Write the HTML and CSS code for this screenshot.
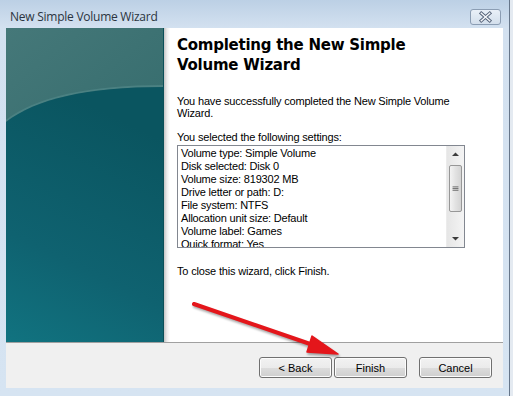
FILE: index.html
```html
<!DOCTYPE html>
<html lang="en">
<head>
    <meta charset="UTF-8">
    <title>New Simple Volume Wizard</title>
    <link rel="stylesheet" href="styles.css">
</head>
<body>
    <div class="window">
        <div class="titlebar">
            <span class="title">New Simple Volume Wizard</span>
            <button class="close" type="button" aria-label="Close">
                <svg width="31" height="16" viewBox="0 0 31 16">
                    <path d="M11 4 L20 12 M20 4 L11 12" stroke="#56647a" stroke-width="3.6" stroke-linecap="square"/>
                    <path d="M11 4 L20 12 M20 4 L11 12" stroke="#f4f6f9" stroke-width="1.6" stroke-linecap="square"/>
                </svg>
            </button>
        </div>
        <div class="client">
            <div class="main">
                <div class="panel">
                    <svg width="158" height="314" viewBox="0 0 158 314">
                        <defs>
                            <linearGradient id="top" x1="0" y1="0" x2="0.4" y2="1">
                                <stop offset="0" stop-color="#457879"/>
                                <stop offset="1" stop-color="#2d6667"/>
                            </linearGradient>
                            <linearGradient id="body" x1="0.3" y1="0" x2="0" y2="1">
                                <stop offset="0" stop-color="#0a5560"/>
                                <stop offset="0.6" stop-color="#0f6270"/>
                                <stop offset="1" stop-color="#117380"/>
                            </linearGradient>
                        </defs>
                        <rect width="158" height="314" fill="url(#top)"/>
                        <path d="M0 93 C30 70 80 58 158 58" fill="none" stroke="#4b8182" stroke-width="2"/>
                        <path d="M0 94 C30 71 80 59 158 59 L158 314 L0 314 Z" fill="url(#body)"/>
                        <rect x="157" width="1" height="314" fill="#0a4f58"/>
                    </svg>
                </div>
                <div class="shade"></div>
                <div class="content">
                    <h1>Completing the New Simple Volume Wizard</h1>
                    <p class="intro">You have successfully completed the New Simple Volume Wizard.</p>
                    <p class="label">You selected the following settings:</p>
                    <div class="listbox">
                        <ul class="settings">
                            <li>Volume type: Simple Volume</li>
                            <li>Disk selected: Disk 0</li>
                            <li>Volume size: 819302 MB</li>
                            <li>Drive letter or path: D:</li>
                            <li>File system: NTFS</li>
                            <li>Allocation unit size: Default</li>
                            <li>Volume label: Games</li>
                            <li>Quick format: Yes</li>
                        </ul>
                        <div class="scrollbar">
                            <svg class="arrow" width="15" height="17" viewBox="0 0 15 17"><path d="M4 10 L7.5 6.5 L11 10 Z" fill="#3c3c3c"/></svg>
                            <div class="thumb">
                                <svg width="13" height="8" viewBox="0 0 13 8"><path d="M3 1.5 H10 M3 3.5 H10 M3 5.5 H10" stroke="#5a5a5a" stroke-width="1"/></svg>
                            </div>
                            <div class="track"></div>
                            <svg class="arrow" width="15" height="17" viewBox="0 0 15 17"><path d="M4 7 L7.5 10.5 L11 7 Z" fill="#3c3c3c"/></svg>
                        </div>
                    </div>
                    <p class="closing">To close this wizard, click Finish.</p>
                </div>
            </div>
            <div class="footer">
                <button class="btn" type="button">&lt; Back</button>
                <button class="btn" type="button">Finish</button>
                <button class="btn cancel" type="button">Cancel</button>
            </div>
        </div>
        <svg class="pointer" width="513" height="396" viewBox="0 0 513 396">
            <line x1="194" y1="304" x2="316" y2="346" stroke="#e4161b" stroke-width="4" stroke-linecap="round"/>
            <path d="M338 354 L307 352 L312 336 Z" fill="#e4161b" stroke="#e4161b" stroke-width="1.5" stroke-linejoin="round"/>
        </svg>
    </div>
</body>
</html>
```

FILE: styles.css
```css
body {
    margin: 0;
    background-color: #e4eaf1;
    font-family: "Liberation Sans", Arial, sans-serif;
    font-size: 11px;
}

.window {
    position: relative;
    width: 510px;
    height: 396px;
    box-sizing: border-box;
    padding: 0 6px 8px 6px;
    border-right: 1px solid #66768a;
    background: linear-gradient(#bcd0e5 0, #d3e1f0 28px, #d6e4f2 100%);
    display: flex;
    flex-direction: column;
}

.titlebar {
    height: 28px;
    display: flex;
    align-items: center;
    justify-content: space-between;
    padding: 0 2px 0 4px;
}

.title {
    padding-top: 4px;
    font-size: 12px;
    color: #2b3440;
    font-family: "Open Sans", "Liberation Sans", sans-serif;
    letter-spacing: -0.25px;
}

.close {
    margin-top: 6px;
    width: 31px;
    height: 16px;
    padding: 0;
    border: 1px solid #8b9db3;
    border-radius: 3px;
    background: linear-gradient(#e9f0f8, #d3dfec);
    display: flex;
    align-items: center;
    justify-content: center;
}

.close svg {
    display: block;
}

.client {
    flex: 1;
    display: flex;
    flex-direction: column;
}

.main {
    height: 314px;
    display: flex;
    background-color: #ffffff;
}

.panel svg {
    display: block;
}

.shade {
    width: 6px;
    background: linear-gradient(to right, #c4c4c4, #ececec 50%, #ffffff);
}

.content {
    padding: 7px 0 0 7px;
    color: #000000;
    letter-spacing: -0.17px;
}

h1 {
    margin: 0;
    width: 270px;
    font-family: "DejaVu Sans", Verdana, sans-serif;
    font-size: 15px;
    font-weight: bold;
    line-height: 20px;
    letter-spacing: -0.25px;
}

p {
    margin: 0;
    line-height: 12px;
}

.intro {
    margin-top: 20px;
    width: 290px;
}

.label {
    margin-top: 12px;
}

.listbox {
    margin-top: 2px;
    width: 288px;
    height: 103px;
    box-sizing: border-box;
    border: 1px solid #828790;
    display: flex;
    overflow: hidden;
}

.settings {
    flex: 1;
    margin: 0;
    padding: 1px 0 0 3px;
    list-style: none;
    line-height: 13px;
    letter-spacing: -0.2px;
}

.scrollbar {
    width: 17px;
    display: flex;
    flex-direction: column;
    align-items: center;
    background: linear-gradient(to right, #e6e6e6, #f4f4f4);
    border-left: 1px solid #ececec;
}

.arrow {
    display: block;
    flex: none;
}

.thumb {
    width: 13px;
    height: 47px;
    margin-top: 2px;
    box-sizing: border-box;
    border: 1px solid #979797;
    border-radius: 2px;
    background: linear-gradient(to right, #f3f3f3, #e2e2e2 50%, #d4d4d4);
    display: flex;
    align-items: center;
    justify-content: center;
}

.track {
    flex: 1;
}

.closing {
    margin-top: 17px;
}

.footer {
    flex: 1;
    border-top: 1px solid #a0a0a0;
    background-color: #f0f0f0;
    display: flex;
    justify-content: flex-end;
    align-items: flex-start;
    padding: 14px 11px 0 0;
}

.btn {
    width: 73px;
    height: 21px;
    margin-left: 2px;
    padding: 0;
    border: 1px solid #707070;
    border-radius: 3px;
    box-shadow: inset 0 0 0 1px #fcfcfc;
    background: linear-gradient(#f2f2f2 0, #ebebeb 50%, #dddddd 51%, #cfcfcf 100%);
    font-family: "Liberation Sans", Arial, sans-serif;
    font-size: 11px;
    color: #000000;
}

.cancel {
    margin-left: 12px;
}

.pointer {
    position: absolute;
    left: 0;
    top: 0;
    pointer-events: none;
    filter: drop-shadow(1px 2px 1px rgba(0, 0, 0, 0.35));
}
```
